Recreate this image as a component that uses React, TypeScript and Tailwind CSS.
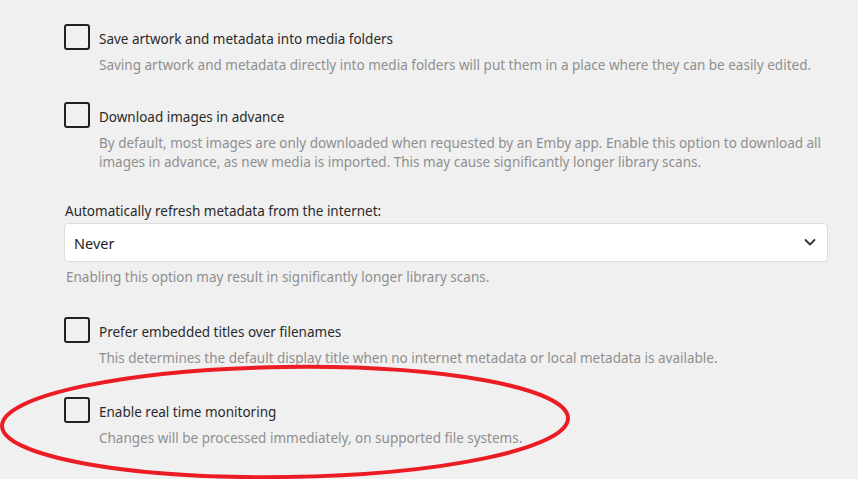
import React from "react";

function Check() {
  return <div className="w-[26px] h-[26px] shrink-0 border-2 border-[#222] rounded-[3px] bg-transparent" />;
}

function Item({ label, desc, className }: { label: string; desc: React.ReactNode; className?: string }) {
  return (
    <div className={"flex gap-[9px] " + (className ?? "")}>
      <Check />
      <div className="flex flex-col">
        <div className="text-[13.5px] leading-[26px] pt-[2px] text-[#2a2a2a] whitespace-nowrap">{label}</div>
        <div className="text-[13.5px] leading-[19.5px] mt-[4px] text-[#8f8f8f] whitespace-nowrap">{desc}</div>
      </div>
    </div>
  );
}

export default function App() {
  return (
    <div
      className="relative w-[858px] h-[479px] overflow-hidden bg-[#f0f0f0] pl-[64px] pr-[30px] pt-[24px]"
      style={{ fontFamily: '"Noto Sans", "Open Sans", sans-serif' }}
    >
      <Item
        label="Save artwork and metadata into media folders"
        desc="Saving artwork and metadata directly into media folders will put them in a place where they can be easily edited."
      />
      <Item
        className="mt-[26px]"
        label="Download images in advance"
        desc={
          <>
            By default, most images are only downloaded when requested by an Emby app. Enable this option to download all
            <br />
            images in advance, as new media is imported. This may cause significantly longer library scans.
          </>
        }
      />
      <div className="mt-[28px]">
        <div className="text-[13.5px] leading-[20px] pl-[1px] text-[#2a2a2a]">Automatically refresh metadata from the internet:</div>
        <div className="mt-[2px] h-[39px] w-[764px] bg-white border border-[#dcdcdc] rounded-[4px] flex items-center justify-between pl-[9px] pr-[10px]">
          <span className="text-[14.5px] text-[#222] pt-[3px]">Never</span>
          <svg width="14" height="14" viewBox="0 0 14 14" fill="none">
            <path d="M2.5 5 L7 9.5 L11.5 5" stroke="#333" strokeWidth="1.8" strokeLinecap="round" strokeLinejoin="round" />
          </svg>
        </div>
        <div className="mt-[5px] text-[13.5px] leading-[20px] pl-[2px] text-[#8f8f8f]">
          Enabling this option may result in significantly longer library scans.
        </div>
      </div>
      <Item
        className="mt-[30px]"
        label="Prefer embedded titles over filenames"
        desc="This determines the default display title when no internet metadata or local metadata is available."
      />
      <Item
        className="mt-[29px]"
        label="Enable real time monitoring"
        desc="Changes will be processed immediately, on supported file systems."
      />
      <svg className="absolute inset-0 pointer-events-none" width="858" height="479" viewBox="0 0 858 479">
        <ellipse
          cx="285"
          cy="422"
          rx="283"
          ry="55"
          transform="rotate(-0.8 285 422)"
          fill="none"
          stroke="#ec1c24"
          strokeWidth="4"
        />
      </svg>
    </div>
  );
}
